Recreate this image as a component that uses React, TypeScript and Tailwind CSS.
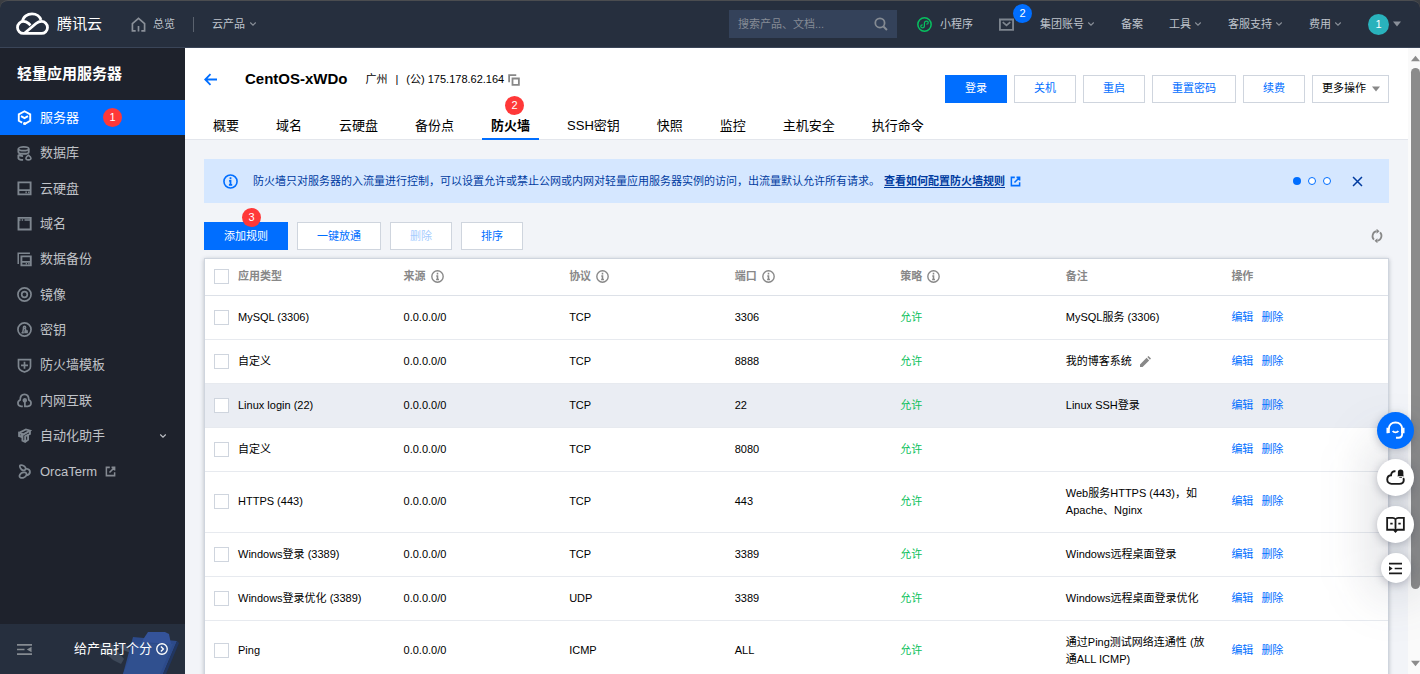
import React, { useState } from 'react';

type IconProps = { className?: string };

const Svg = ({ className = 'w-[15px] h-[15px]', children }: { className?: string; children: React.ReactNode }) => (
  <svg viewBox="0 0 16 16" fill="none" stroke="currentColor" strokeWidth="1.8" className={`flex-none ${className}`} aria-hidden="true">
    {children}
  </svg>
);

const ServerIcon = () => (
  <Svg>
    <path d="M5.500 13.500 1.900 11.500V4.700L8 1.300l6.100 3.400v6.800L8 15" strokeWidth="2" />
    <path d="m4.300 6.500 3.700 2.200 3.700-2.200" strokeWidth="2" />
    <circle cx="8" cy="14.300" r="1.600" fill="currentColor" stroke="none" />
  </Svg>
);

const DatabaseIcon = () => (
  <Svg>
    <ellipse cx="7" cy="3" rx="5.500" ry="2" />
    <path d="M1.500 3v3.300c0 1 2 2 5.500 2s5.500-1 5.500-2V3M1.500 9v0c.5 1 2 1.700 5 1.800M1.500 9.500v3.500c.3 1.200 2 1.800 5 1.800" strokeWidth="2" />
    <path d="M12.200 9.800c-1.800 1.300-2.700 2.200-2.700 3.200 0 1.200 1 1.800 2.700 1.800s2.700-.6 2.700-1.800c0-1-.9-1.900-2.700-3.200Z" strokeWidth="1.700" />
  </Svg>
);

const DiskIcon = () => (
  <Svg>
    <path d="M1.500 1.500h13v12.800h-13z" strokeWidth="2" />
    <path d="M1.500 9.800h13M9 12.200h1.500M11.800 12.200h1.500" />
  </Svg>
);

const DomainIcon = () => (
  <Svg>
    <path d="M1.600 2h13v12.400h-13z" strokeWidth="2" />
    <path d="M2 4.300h1.800M5 4.300h1.500M8 4.300h6" strokeWidth="1.600" />
  </Svg>
);

const BackupIcon = () => (
  <Svg>
    <path d="M4.700 4.700h10v9.500h-10z" strokeWidth="2" />
    <path d="M4.700 10.500h10M9.300 12.500h1.300M12 12.500h1.300" />
    <path d="M1.300 12.800V1.300h12.500" strokeWidth="1.600" />
  </Svg>
);

const ImageIcon = () => (
  <Svg>
    <circle cx="8" cy="8" r="7" />
    <circle cx="8" cy="8" r="3" />
  </Svg>
);

const KeyIcon = () => (
  <Svg>
    <circle cx="8" cy="8" r="7" />
    <circle cx="8" cy="5.800" r="1.200" strokeWidth="1.600" />
    <path d="M7 6.500 6 11.500M4.800 11.500h2.500M8.800 7l.7 2M8.500 11.300h2.300V9.500H8.600z" strokeWidth="1.600" />
  </Svg>
);

const ShieldIcon = () => (
  <Svg>
    <path d="M1.600 1.800h12.800v7.200c0 3-3 4.800-6.400 6-3.400-1.200-6.400-3-6.400-6z" />
    <path d="M8 4v7.500M4.300 7.800h7.400" />
  </Svg>
);

const NetworkIcon = () => (
  <Svg>
    <path d="M6.200 14.200H4.500C2.300 14.200 1 12.500 1 10.700c0-1.700 1-2.800 2.400-3.300C3.400 3.800 5.300 1.500 8 1.500s4.600 2.300 4.600 5.900C14 7.900 15 9 15 10.700c0 1.800-1.300 3.500-3.500 3.500H8.400V8" />
    <circle cx="8.300" cy="7.800" r="1.500" fill="currentColor" />
  </Svg>
);

const RobotIcon = () => (
  <Svg>
    <path d="m2.200 5.200 7.300-3.700 4.300 1.300-6.800 4-4.800-1.600v3.300l2.800 1V7" strokeWidth="2" />
    <path d="M13.800 3v3.200L8.700 8.800v6M5.800 7.500v6l2.900 1.300 3.100-2.300V8" strokeWidth="2" />
  </Svg>
);

const OrcaIcon = () => (
  <Svg>
    <path d="M3 2.500C3 .5 6 .8 8 2.500c1.800 1.600 1.500 3.500 0 4.200C6 7.500 3 5 3 2.500Z" strokeWidth="1.900" />
    <path d="M9.300 5c3 .3 4.500 1.800 4.500 3.500 0 1.800-1.300 3-3.800 3.600" strokeWidth="2" />
    <path d="M3 11.500c1-2 3.500-2.800 5.500-2.500 1.800.5 2.200 2.300 1 3.800-1.500 1.900-4.500 2.600-6 1.600C2.500 13.700 2.500 12.500 3 11.500Z" strokeWidth="1.900" />
  </Svg>
);

const ExternalIcon = ({ className = 'w-[11px] h-[11px]' }: IconProps) => (
  <Svg className={className}>
    <path d="M7 2H2v12h12V9M9.500 2H14v4.500M14 2 6.500 9.500" strokeWidth="2.200" />
  </Svg>
);

const InfoIcon = ({ className = 'w-[13px] h-[13px]' }: IconProps) => (
  <Svg className={className}>
    <circle cx="8" cy="8" r="7" strokeWidth="1.700" />
    <path d="M8 3.500v2M6.500 7.300H8v4.200M6.300 11.700h3.500" strokeWidth="1.900" />
  </Svg>
);

const Chevron = ({ className = 'w-2 h-2 text-[#8a9099]' }: IconProps) => (
  <Svg className={className}>
    <path d="m2.500 5 5.500 5.500L13.500 5" strokeWidth="2.200" />
  </Svg>
);

const Caret = ({ className = 'w-2 h-[6px]' }: IconProps) => (
  <svg viewBox="0 0 8 6" fill="currentColor" className={`flex-none ${className}`} aria-hidden="true">
    <path d="M0 .5h8L4 5.500z" />
  </svg>
);

const Badge = ({ className, children }: { className: string; children: React.ReactNode }) => (
  <span className={`flex items-center justify-center w-[19px] h-[19px] rounded-full text-[11px] leading-none font-normal text-white ${className}`}>
    {children}
  </span>
);

const menu = [
  { name: '服务器', icon: ServerIcon },
  { name: '数据库', icon: DatabaseIcon },
  { name: '云硬盘', icon: DiskIcon },
  { name: '域名', icon: DomainIcon },
  { name: '数据备份', icon: BackupIcon },
  { name: '镜像', icon: ImageIcon },
  { name: '密钥', icon: KeyIcon },
  { name: '防火墙模板', icon: ShieldIcon },
  { name: '内网互联', icon: NetworkIcon },
  { name: '自动化助手', icon: RobotIcon },
  { name: 'OrcaTerm', icon: OrcaIcon },
];

const tabs = ['概要', '域名', '云硬盘', '备份点', '防火墙', 'SSH密钥', '快照', '监控', '主机安全', '执行命令'];

const topLinks = [
  { name: '集团账号', more: true },
  { name: '备案', more: false },
  { name: '工具', more: true },
  { name: '客服支持', more: true },
  { name: '费用', more: true },
];

const notice =
  '防火墙只对服务器的入流量进行控制\uff0c可以设置允许或禁止公网或内网对轻量应用服务器实例的访问\uff0c出流量默认允许所有请求。';

const columns = [
  { name: '应用类型', info: false },
  { name: '来源', info: true },
  { name: '协议', info: true },
  { name: '端口', info: true },
  { name: '策略', info: true },
  { name: '备注', info: false },
  { name: '操作', info: false },
];

const rules = [
  { type: 'MySQL (3306)', protocol: 'TCP', port: '3306', note: 'MySQL服务 (3306)' },
  { type: '自定义', protocol: 'TCP', port: '8888', note: '我的博客系统', editable: true },
  { type: 'Linux login (22)', protocol: 'TCP', port: '22', note: 'Linux SSH登录', active: true },
  { type: '自定义', protocol: 'TCP', port: '8080', note: '' },
  { type: 'HTTPS (443)', protocol: 'TCP', port: '443', note: 'Web服务HTTPS (443)\uff0c如Apache、Nginx' },
  { type: 'Windows登录 (3389)', protocol: 'TCP', port: '3389', note: 'Windows远程桌面登录' },
  { type: 'Windows登录优化 (3389)', protocol: 'UDP', port: '3389', note: 'Windows远程桌面登录优化' },
  { type: 'Ping', protocol: 'ICMP', port: 'ALL', note: '通过Ping测试网络连通性 (放通ALL ICMP)' },
];

const btn = 'h-7 px-[19px] border flex items-center justify-center whitespace-nowrap text-[11px]';
const btnPrimary = `${btn} bg-[#006eff] border-[#006eff] text-white`;
const btnOutline = `${btn} bg-white border-[#cfd5de] text-[#006eff]`;
const checkbox = 'block appearance-none w-[15px] h-[15px] border border-[#cfd5de] bg-white checked:bg-[#006eff]';

const Header = () => (
  <header className="flex-none h-12 flex items-center bg-[#262f3e] border-t border-t-[#4b4d50] border-b border-b-[#3a4558] rounded-t-lg pl-4 pr-[19px] text-[11px] text-[#bfc4cc]">
    <a href="#home" className="flex items-center gap-2 text-white">
      <svg viewBox="0 0 33 24" fill="none" stroke="currentColor" strokeWidth="2.800" className="w-[33px] h-6" aria-hidden="true">
        <path d="M6.500 9.500C7 4.500 11.500 1.800 16 1.800c4.500 0 8 2.700 9 6.200" />
        <path d="M8.500 21.300 20 11.500c2-1.600 3.800-2.100 5.500-2.100a6 6 0 0 1 0 12h-18a6 6 0 1 1 0-12c2 0 3.500.7 5 2l2 1.800" />
      </svg>
      <span className="text-[15px] leading-5 font-normal">腾讯云</span>
    </a>
    <a href="#overview" className="flex items-center gap-[7px] ml-[29px]">
      <Svg className="w-[15px] h-[15px] text-[#8a9099]">
        <path d="M5 14.800H1.500V7L8 1.500 14.500 7v7.800H11M8 9.500v6" />
      </Svg>
      总览
    </a>
    <span className="w-px h-[15px] bg-[#5a626e] mx-[18px]" />
    <button className="flex items-center gap-1">
      云产品
      <Chevron />
    </button>

    <label className="ml-auto w-[168px] h-7 flex items-center bg-[#34425a] px-[9px]">
      <input type="text" aria-label="搜索" placeholder="搜索产品、文档..." className="min-w-0 flex-1 bg-transparent outline-none placeholder:text-[#858b95]" />
      <Svg className="w-[14px] h-[14px] text-[#858b93]">
        <circle cx="6.800" cy="6.800" r="5.300" strokeWidth="2" />
        <path d="m10.800 10.800 4 4" strokeWidth="2.200" />
      </Svg>
    </label>

    <div className="flex items-center gap-[26px] ml-5">
      <a href="#mini" className="flex items-center gap-2">
        <Svg className="w-[15px] h-[15px] text-[#07c160]">
          <circle cx="8" cy="8" r="7.100" strokeWidth="1.600" />
          <path d="M6 8.300c-1.200 0-2 .7-2 1.600 0 1 .8 1.600 1.800 1.600 1.300 0 2.100-.8 2.100-2V6.600c0-1.200.9-2.100 2.200-2.100 1 0 1.900.6 1.900 1.600 0 .9-.8 1.600-2 1.600" strokeWidth="1.300" />
        </Svg>
        小程序
      </a>
      <button aria-label="消息" className="relative text-[#7d858f]">
        <Svg className="block w-[15px] h-[15px]">
          <path d="M1 2.700h14v11H1z" strokeWidth="2" />
          <path d="m4 5.500 4 3.500 4-3.500" />
        </Svg>
        <Badge className="absolute -top-[13px] left-[14px] bg-[#006eff]">2</Badge>
      </button>
      {topLinks.map((link) => (
        <a key={link.name} href="#menu" className="flex items-center gap-[3px] whitespace-nowrap">
          {link.name}
          {link.more && <Chevron />}
        </a>
      ))}
      <button className="flex items-center gap-1 text-[#8a9099]">
        <span className="w-[21px] h-[21px] rounded-full bg-[#29b2bc] text-white flex items-center justify-center">1</span>
        <Caret />
      </button>
    </div>
  </header>
);

const Sidebar = () => (
  <aside className="flex-none w-[185px] flex flex-col bg-[#1e222c]">
    <h2 className="h-[52px] flex items-center pl-[17px] text-[15px] font-bold text-white">轻量应用服务器</h2>
    <nav className="grid auto-rows-fr h-[389px]">
      {menu.map((item, index) => (
        <a
          key={item.name}
          href="#menu"
          className={`flex items-center gap-2 pl-[17px] pr-[18px] text-[13px] ${index === 0 ? 'bg-[#006eff] text-white' : 'text-[#c0c3c8]'}`}
        >
          <span className={index === 0 ? 'text-white' : 'text-[#7e868f]'}>
            <item.icon />
          </span>
          {item.name}
          {index === 0 && <Badge className="ml-4 bg-[#ff3838]">1</Badge>}
          {item.name === '自动化助手' && <Chevron className="w-[8px] h-[8px] ml-auto" />}
          {item.name === 'OrcaTerm' && <ExternalIcon className="w-[11px] h-[11px] text-[#858a92]" />}
        </a>
      ))}
    </nav>
    <div className="relative mt-auto h-[50px] flex items-center justify-between pl-[17px] pr-[17px] bg-[#262f3e] text-white overflow-hidden">
      <svg viewBox="0 0 84 44" className="absolute right-1 bottom-0 w-[84px] h-11" aria-hidden="true">
        <path d="M0 15 14 13 27 29 24 34 16 30Z" fill="#3d4858" />
        <path d="M16 13h12l6 10-8-3Z" fill="#3f4b5f" />
        <path d="M36 7 80 11 66 44H26Z" fill="#2c4a8a" />
        <path d="M66 44 80 11l2 2-13 31Z" fill="#213661" />
        <path d="M47 8 51 2h17l4 2 2 10-29-2Z" fill="#34539a" />
        <path d="M38 14h38L63 44H26Z" fill="#30508f" />
      </svg>
      <button aria-label="收起菜单" className="relative text-[#858b91]">
        <Svg className="block w-[15px] h-[15px]">
          <path d="M0 3h16M0 8h8M0 13h16" />
          <path d="m15.500 5-5 3 5 3z" fill="currentColor" stroke="none" />
        </Svg>
      </button>
      <a href="#rate" className="relative flex items-center gap-1 text-[13px]">
        给产品打个分
        <Svg className="w-3 h-3">
          <circle cx="8" cy="8" r="7" />
          <path d="m6.500 4.800 3.300 3.200-3.300 3.200" />
        </Svg>
      </a>
    </div>
  </aside>
);

const RuleTable = () => {
  const [checked, setChecked] = useState<number[]>([]);

  const toggle = (index: number) => {
    setChecked(checked.includes(index) ? checked.filter((i) => i !== index) : [...checked, index]);
  };

  return (
    <div className="mt-2 bg-white border border-[#cfd5de] shadow-[0_1px_4px_rgba(54,58,80,0.3)]">
      <table className="w-full table-fixed text-left text-[11px] leading-[17px] text-black">
        <thead>
          <tr className="h-9 border-b border-[#dde1e8] text-[#888888]">
            <th className="w-6 pl-[9px]">
              <input
                type="checkbox"
                aria-label="全选"
                className={checkbox}
                checked={checked.length === rules.length}
                onChange={() => setChecked(checked.length === rules.length ? [] : rules.map((_, i) => i))}
              />
            </th>
            {columns.map((column) => (
              <th key={column.name} className="px-[9px] font-bold">
                <span className="flex items-center gap-[5px]">
                  {column.name}
                  {column.info && <InfoIcon />}
                </span>
              </th>
            ))}
          </tr>
        </thead>
        <tbody>
          {rules.map((rule, index) => (
            <tr key={index} className={`h-11 border-b border-[#e7eaef] ${rule.active ? 'bg-[#eaedf3]' : ''}`}>
              <td className="pl-[9px]">
                <input type="checkbox" aria-label={rule.type} className={checkbox} checked={checked.includes(index)} onChange={() => toggle(index)} />
              </td>
              <td className="px-[9px]">{rule.type}</td>
              <td className="px-[9px]">0.0.0.0/0</td>
              <td className="px-[9px]">{rule.protocol}</td>
              <td className="px-[9px]">{rule.port}</td>
              <td className="px-[9px] text-[#0abf5b]">允许</td>
              <td className="px-[9px] py-[13px]">
                {rule.note}
                {rule.editable && (
                  <button aria-label="编辑备注" className="ml-2 align-middle text-[#888888]">
                    <svg viewBox="0 0 12 12" fill="currentColor" className="w-[11px] h-[11px]" aria-hidden="true">
                      <path d="M0 12V9.200L7.200 2 10 4.800 2.800 12ZM8 1.200 9.200 0 12 2.800 10.800 4Z" />
                    </svg>
                  </button>
                )}
              </td>
              <td className="px-[9px] text-[#006eff]">
                <span className="flex gap-2">
                  <a href="#edit">编辑</a>
                  <a href="#delete">删除</a>
                </span>
              </td>
            </tr>
          ))}
        </tbody>
      </table>
    </div>
  );
};

const FloatingTools = () => {
  const round = 'relative flex items-center justify-center rounded-full shadow-[0_2px_8px_rgba(54,58,80,0.3)]';

  return (
    <div className="absolute right-[6px] bottom-[91px] flex flex-col items-center gap-[10px] text-[#1a1a1a]">
      <div className="absolute -inset-x-2 top-6 -bottom-4 rounded-full bg-[#363a50]/15 blur-xl pointer-events-none" />
      <button aria-label="在线客服" className={`${round} w-[37px] h-[37px] bg-[#006eff] text-white`}>
        <svg viewBox="0 0 20 20" fill="none" stroke="currentColor" strokeWidth="2" className="w-[19px] h-[19px]" aria-hidden="true">
          <path d="M3 8.500C3 4 6 1.500 10 1.500S17 4 17 8.500v5c0 2.800-1.500 4.200-4 4.200h-2.500" />
          <path d="M1.500 7v6M18.500 7v6M3 8v4.500M17 8v4.500" />
          <path d="M7 10.500c1.500 2 4.500 2 6 0" />
        </svg>
      </button>
      <button aria-label="云助手" className={`${round} w-[37px] h-[37px] bg-white`}>
        <svg viewBox="0 0 20 20" fill="none" stroke="currentColor" strokeWidth="2" className="w-[19px] h-[19px]" aria-hidden="true">
          <path d="M10 3.500C7.500 3 5.500 4.500 5.300 7.700 3 8 1.300 9.800 1.300 12.200c0 2.700 2 4.500 4.500 4.500H14c2.800 0 4.700-1.500 4.700-4 0-.8-.2-1.500-.6-2" />
          <path d="M12.500 8V4.500a2.900 2.900 0 0 1 5.800 0V8l.8.800h-7.400zM14 9.500h2.800v.8H14z" fill="currentColor" stroke="none" />
        </svg>
      </button>
      <button aria-label="帮助文档" className={`${round} w-[37px] h-[37px] bg-white`}>
        <svg viewBox="0 0 20 20" fill="none" stroke="currentColor" strokeWidth="1.900" className="w-[19px] h-[19px]" aria-hidden="true">
          <path d="M10 4.500C9 3.300 8 3 7 3H1.200v12.500H8L10 17.500l2-2h6.800V3H13c-1 0-2 .3-3 1.500ZM10 4.500v12M4.500 9H7M13 9h2.500" />
        </svg>
      </button>
      <button aria-label="展开" className={`${round} w-[30px] h-[30px] bg-white`}>
        <Svg className="w-[13px] h-[13px]">
          <path d="M0 2h16M7 8h9M0 14h16" strokeWidth="2" />
          <path d="M0 5v6l4.500-3z" fill="currentColor" stroke="none" />
        </Svg>
      </button>
    </div>
  );
};

const App = () => {
  const [activeTab, setActiveTab] = useState('防火墙');

  return (
    <div className="relative h-screen flex flex-col overflow-hidden bg-[#3a3d42] font-['Liberation_Sans','Noto_Sans_CJK_SC',sans-serif]">
      <Header />
      <div className="flex-1 min-h-0 flex">
        <Sidebar />
        <main className="flex-1 min-w-0 overflow-hidden bg-[#f2f4f8]">
          <div className="bg-white border-b border-[#e3e6ec] pl-[19px] pr-[19px]">
            <div className="h-[63px] flex items-center text-[11px] text-black">
              <a href="#back" aria-label="返回" className="text-[#006eff]">
                <Svg className="w-[13px] h-[13px]">
                  <path d="M16 8H2M8 1.500 1.500 8 8 14.500" strokeWidth="2.200" />
                </Svg>
              </a>
              <h1 className="ml-7 text-[15px] font-bold">CentOS-xWDo</h1>
              <span className="ml-[18px]">广州</span>
              <span className="mx-2">|</span>
              <span>(公) 175.178.62.164</span>
              <button aria-label="复制" className="ml-1 text-[#888888]">
                <Svg className="block w-3 h-3">
                  <path d="M6 6h8.500v8.500H6z" strokeWidth="2.400" />
                  <path d="M1.500 11V1.500H11" strokeWidth="2.400" />
                </Svg>
              </button>
              <div className="ml-auto mt-[18px] flex gap-[7px]">
                <button className={btnPrimary}>登录</button>
                <button className={btnOutline}>关机</button>
                <button className={btnOutline}>重启</button>
                <button className={btnOutline}>重置密码</button>
                <button className={btnOutline}>续费</button>
                <button className="h-7 pl-[9px] pr-2 border border-[#cfd5de] bg-white flex items-center gap-[6px] text-[11px] text-black">
                  更多操作
                  <span className="text-[#888888]">
                    <Caret />
                  </span>
                </button>
              </div>
            </div>
            <div role="tablist" className="flex gap-[19px] text-[13px] text-black">
              {tabs.map((tab) => (
                <button
                  key={tab}
                  role="tab"
                  aria-selected={activeTab === tab}
                  onClick={() => setActiveTab(tab)}
                  className={`relative h-[29px] px-[9px] pt-[2px] -mb-px border-b-2 whitespace-nowrap ${activeTab === tab ? 'border-[#006eff] font-bold' : 'border-transparent'}`}
                >
                  {tab}
                  {tab === '防火墙' && <Badge className="absolute -top-[15px] left-[23px] bg-[#ff3838]">2</Badge>}
                </button>
              ))}
            </div>
          </div>

          <div className="px-[19px] pt-[19px]">
            <div className="h-11 flex items-center pl-[19px] pr-[26px] bg-[#d5e7ff] text-[11px] text-[#003b9f]">
              <InfoIcon className="w-[15px] h-[15px] text-[#006eff]" />
              <p className="ml-[15px] whitespace-nowrap">
                {notice}
                <a href="#docs" className="ml-1 font-bold underline underline-offset-2">查看如何配置防火墙规则</a>
              </p>
              <span className="ml-[5px] text-[#006eff]">
                <ExternalIcon />
              </span>
              <div className="ml-auto flex items-center gap-[7px]">
                <span className="w-2 h-2 rounded-full bg-[#006eff]" />
                <span className="w-2 h-2 rounded-full border border-[#006eff] bg-white" />
                <span className="w-2 h-2 rounded-full border border-[#006eff] bg-white" />
              </div>
              <button aria-label="关闭" className="ml-[21px]">
                <Svg className="block w-[11px] h-[11px]">
                  <path d="m1.500 1.500 13 13M14.500 1.500l-13 13" strokeWidth="2.200" />
                </Svg>
              </button>
            </div>

            <div className="mt-[19px] flex items-center gap-[9px]">
              <button className={`relative ${btnPrimary}`}>
                添加规则
                <Badge className="absolute -top-[15px] left-[37px] bg-[#ff3838]">3</Badge>
              </button>
              <button className={btnOutline}>一键放通</button>
              <button disabled className={`${btn} bg-white border-[#cfd5de] text-[#a6cdff]`}>删除</button>
              <button className={btnOutline}>排序</button>
              <button aria-label="刷新" className="ml-auto mr-[5px] text-[#888888]">
                <Svg className="block w-[14px] h-[14px]">
                  <path d="M4.500 12.200A5.800 5.800 0 0 1 7.500 2.500M11.500 3.800A5.800 5.800 0 0 1 8.500 13.500" strokeWidth="2" />
                  <path d="M7.500-.3v5.600l3.400-2.800zM8.500 10.700v5.600l-3.400-2.800z" fill="currentColor" stroke="none" />
                </Svg>
              </button>
            </div>

            <RuleTable />
          </div>
        </main>

        {/* Scrollbar */}
        <div className="flex-none w-3 flex flex-col items-end bg-[#fafafa] py-[7px] text-[#8b8b8b]">
          <Caret className="w-[9px] h-[7px] rotate-180" />
          <div className="mt-[6px] w-[9px] flex-1 mb-[71px] rounded-full bg-[#8b8b8b]" />
          <Caret className="w-[9px] h-[7px]" />
        </div>
      </div>
      <FloatingTools />
    </div>
  );
};

export default App;
